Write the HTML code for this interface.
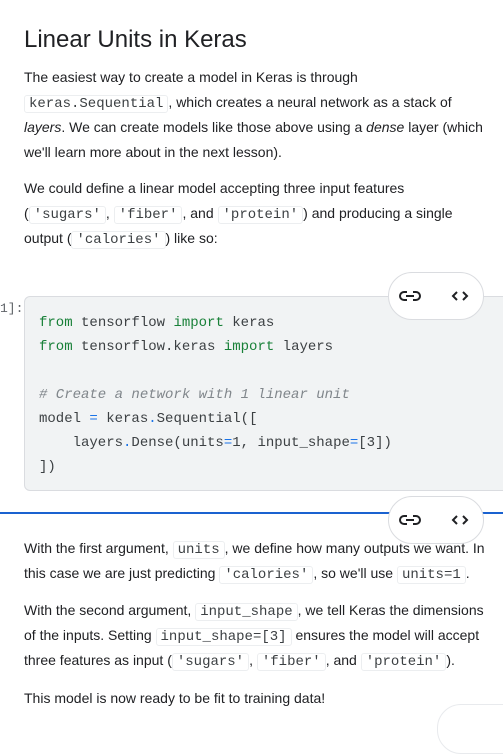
<!DOCTYPE html><html><head><style>
body{margin:0;width:503px;height:719px;overflow:hidden;background:#fff;font-family:"Liberation Sans",sans-serif;color:#202124;position:relative}
.a{position:absolute}
h1{position:absolute;left:24px;top:26px;margin:0;font-weight:400;font-size:24px;color:#202124}
p{position:absolute;left:24px;margin:0;font-size:14px;line-height:25px;width:470px}
code{font-family:"Liberation Mono",monospace;font-size:14px;line-height:14px;border:1px solid #eceef0;border-radius:3px;padding:1px 4px;background:#fff;color:#3c4043;display:inline-block;vertical-align:baseline}
.cb{left:24px;top:296px;width:490px;height:195px;background:#f1f3f4;border:1px solid #dadce0;border-radius:6px;box-sizing:border-box}
pre{position:absolute;left:39px;top:311px;margin:0;font-family:"Liberation Mono",monospace;font-size:14px;line-height:24px;color:#3c4043}
.k{color:#188038}.c{color:#80868b;font-style:italic}.o{color:#1a73e8}
.pill{width:96px;height:48px;border:1px solid #dadce0;border-radius:24px;background:#fff;box-sizing:border-box}
</style></head><body>
<h1>Linear Units in Keras</h1>
<p style="top:65px">The easiest way to create a model in Keras is through<br><code>keras.Sequential</code>, which creates a neural network as a stack of<br><i>layers</i>. We can create models like those above using a <i>dense</i> layer (which<br>we'll learn more about in the next lesson).</p>
<p style="top:176px">We could define a linear model accepting three input features<br>(<code>'sugars'</code>, <code>'fiber'</code>, and <code>'protein'</code>) and producing a single<br>output (<code>'calories'</code>) like so:</p>
<div class="a" style="left:0;top:301px;font-family:'Liberation Mono',monospace;font-size:13px;color:#5f6368">1]:</div>
<div class="a cb"></div>
<pre><span class="k">from</span> tensorflow <span class="k">import</span> keras
<span class="k">from</span> tensorflow.keras <span class="k">import</span> layers

<span class="c"># Create a network with 1 linear unit</span>
model <span class="o">=</span> keras<span class="o">.</span>Sequential([
    layers<span class="o">.</span>Dense(units<span class="o">=</span>1, input_shape<span class="o">=</span>[3])
])</pre>
<div class="a" style="left:0;top:512px;width:503px;height:2px;background:#1a62d0"></div>
<div class="a pill" style="left:388px;top:272px"></div>
<div class="a pill" style="left:388px;top:496px"></div>
<svg class="a" style="left:388px;top:272px" width="96" height="48"><g fill="none" stroke="#202124" stroke-width="2"><path d="M19 20h-3a4 4 0 0 0 0 8h3M25 20h3a4 4 0 0 1 0 8h-3M18 24h8"/><path d="M69 20l-4 4 4 4M75 20l4 4-4 4"/></g></svg>
<svg class="a" style="left:388px;top:496px" width="96" height="48"><g fill="none" stroke="#202124" stroke-width="2"><path d="M19 20h-3a4 4 0 0 0 0 8h3M25 20h3a4 4 0 0 1 0 8h-3M18 24h8"/><path d="M69 20l-4 4 4 4M75 20l4 4-4 4"/></g></svg>
<p style="top:536px">With the first argument, <code>units</code>, we define how many outputs we want. In<br>this case we are just predicting <code>'calories'</code>, so we'll use <code>units=1</code>.</p>
<p style="top:598px">With the second argument, <code>input_shape</code>, we tell Keras the dimensions<br>of the inputs. Setting <code>input_shape=[3]</code> ensures the model will accept<br>three features as input (<code>'sugars'</code>, <code>'fiber'</code>, and <code>'protein'</code>).</p>
<p style="top:686px">This model is now ready to be fit to training data!</p>
<div class="a" style="left:437px;top:704px;width:96px;height:48px;border:1px solid #e8eaed;border-radius:24px;background:#fff"></div>
</body></html>
